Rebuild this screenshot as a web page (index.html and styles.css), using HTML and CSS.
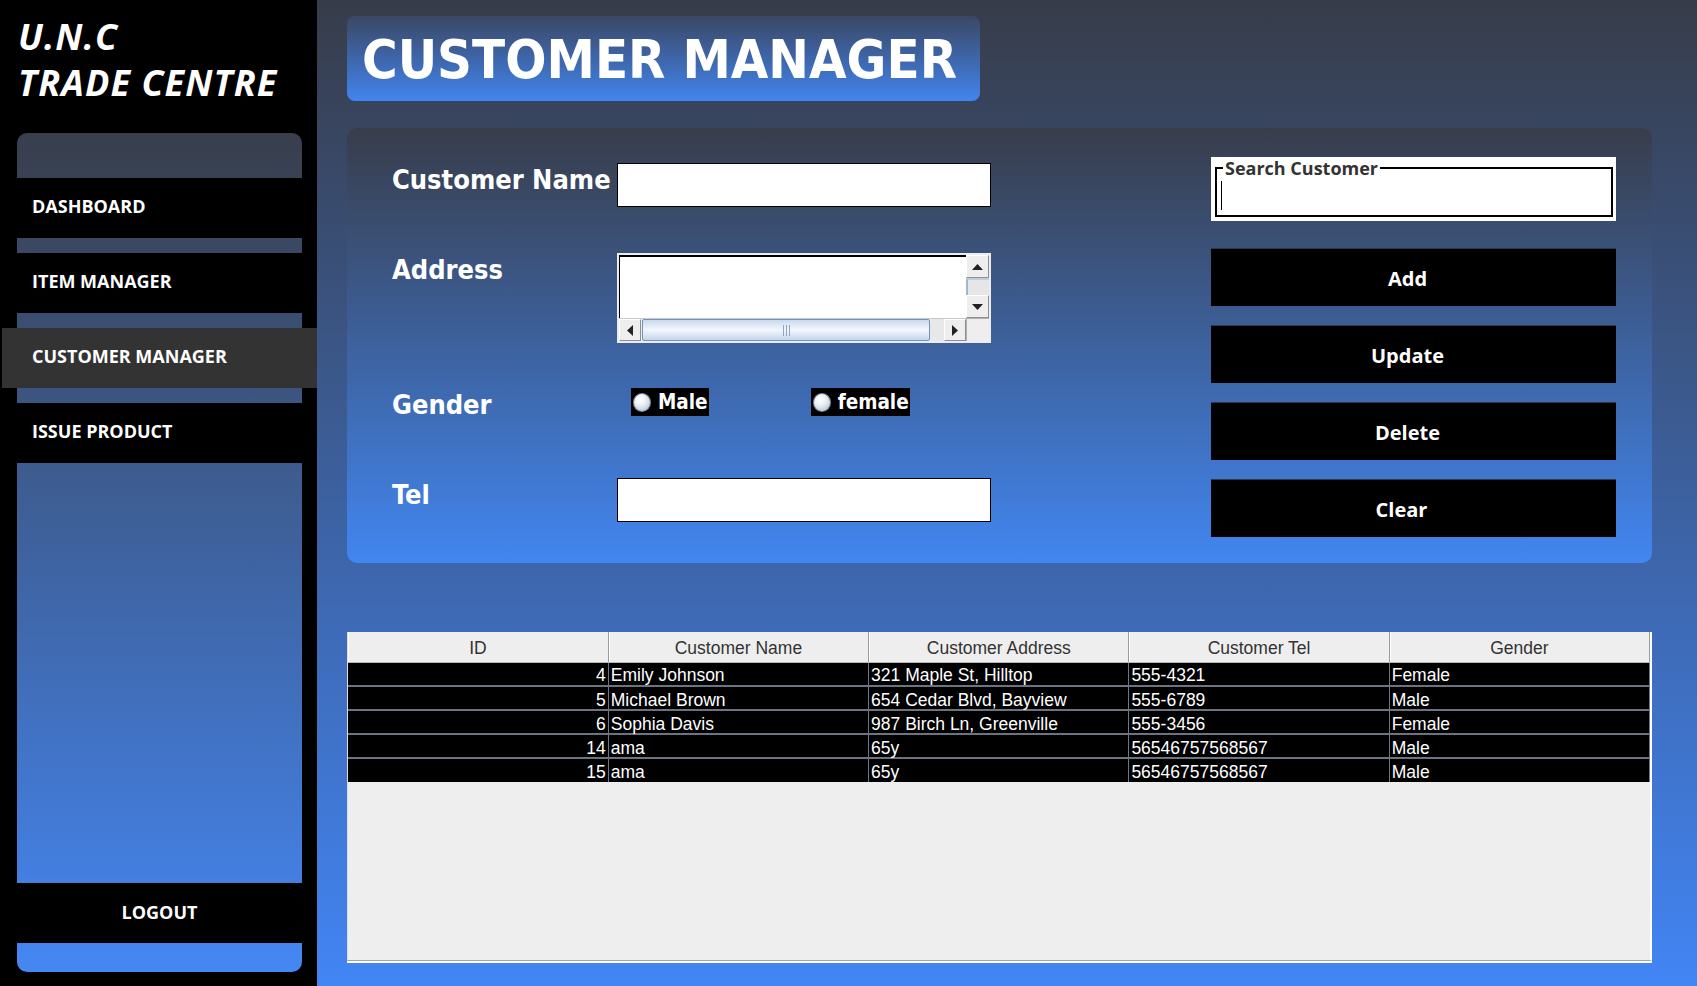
FILE: index.html
```html
<!DOCTYPE html>
<html lang="en">
<head>
<meta charset="utf-8">
<title>Customer Manager</title>
<link rel="stylesheet" href="styles.css">
</head>
<body>
<aside class="sidebar">
  <div class="logo">
    <div>U.N.C</div>
    <div>TRADE CENTRE</div>
  </div>
  <nav class="nav">
    <div class="nav-top"></div>
    <a class="nav-item">DASHBOARD</a>
    <a class="nav-item">ITEM MANAGER</a>
    <a class="nav-item active">CUSTOMER MANAGER</a>
    <a class="nav-item last">ISSUE PRODUCT</a>
    <div class="nav-fill"></div>
    <a class="nav-logout">LOGOUT</a>
    <div class="nav-bottom"></div>
  </nav>
</aside>

<main class="main">
  <header class="title-box"><h1>CUSTOMER MANAGER</h1></header>

  <section class="form-panel">
    <div class="form-left">
      <div class="lbl">Customer Name</div>
      <div class="input"></div>

      <div class="lbl">Address</div>
      <div class="ta">
        <div class="ta-text"></div>
        <div class="vs">
          <div class="sb-btn"><svg width="11" height="6" viewBox="0 0 11 6"><path d="M0 6 L5.5 0 L11 6 Z" fill="#222"/></svg></div>
          <div class="vs-track"></div>
          <div class="sb-btn"><svg width="11" height="6" viewBox="0 0 11 6"><path d="M0 0 L11 0 L5.5 6 Z" fill="#222"/></svg></div>
        </div>
        <div class="hs">
          <div class="sb-btn"><svg width="6" height="11" viewBox="0 0 6 11"><path d="M6 0 L6 11 L0 5.5 Z" fill="#222"/></svg></div>
          <div class="hs-thumb"><span class="grip"></span></div>
          <div class="hs-track"></div>
          <div class="sb-btn"><svg width="6" height="11" viewBox="0 0 6 11"><path d="M0 0 L6 5.5 L0 11 Z" fill="#222"/></svg></div>
        </div>
        <div class="corner"></div>
      </div>

      <div class="lbl">Gender</div>
      <div class="radios">
        <label class="radio"><span class="dot"></span>Male</label>
        <label class="radio"><span class="dot"></span>female</label>
      </div>

      <div class="lbl">Tel</div>
      <div class="input"></div>
    </div>

    <div class="form-right">
      <div class="search">
        <fieldset>
          <legend>Search Customer</legend>
          <span class="caret"></span>
        </fieldset>
      </div>
      <button class="btn first">Add</button>
      <button class="btn">Update</button>
      <button class="btn">Delete</button>
      <button class="btn clear">Clear</button>
    </div>
  </section>

  <section class="table-wrap">
    <table>
      <thead>
        <tr><th>ID</th><th>Customer Name</th><th>Customer Address</th><th>Customer Tel</th><th>Gender</th></tr>
      </thead>
      <tbody>
        <tr><td class="num">4</td><td>Emily Johnson</td><td>321 Maple St, Hilltop</td><td>555-4321</td><td>Female</td></tr>
        <tr><td class="num">5</td><td>Michael Brown</td><td>654 Cedar Blvd, Bayview</td><td>555-6789</td><td>Male</td></tr>
        <tr><td class="num">6</td><td>Sophia Davis</td><td>987 Birch Ln, Greenville</td><td>555-3456</td><td>Female</td></tr>
        <tr><td class="num">14</td><td>ama</td><td>65y</td><td>56546757568567</td><td>Male</td></tr>
        <tr><td class="num">15</td><td>ama</td><td>65y</td><td>56546757568567</td><td>Male</td></tr>
      </tbody>
    </table>
  </section>
</main>
</body>
</html>
```

FILE: styles.css
```css
* { box-sizing: border-box; }

html, body {
  margin: 0;
  height: 100%;
}

body {
  display: flex;
  width: 1697px;
  height: 986px;
  overflow: hidden;
  background: #000;
  font-family: "Open Sans", "Noto Sans", sans-serif;
}

/* ---------- sidebar ---------- */
.sidebar {
  width: 317px;
  flex: none;
  background: #000;
  display: flex;
  flex-direction: column;
}

.logo {
  padding: 14px 0 0 18px;
  color: #fff;
  font-style: italic;
  font-weight: 700;
  font-size: 36px;
  line-height: 46px;
  letter-spacing: 1.1px;
}

.nav {
  margin: 27px 15px 0 17px;
  height: 839px;
  border-radius: 10px;
  background: linear-gradient(#383e4c, #4587f3);
  display: flex;
  flex-direction: column;
}

.nav-top { height: 45px; }

.nav-item {
  height: 60px;
  margin-bottom: 15px;
  padding: 0 0 4px 15px;
  background: #000;
  color: #fff;
  font-weight: 700;
  font-size: 18px;
  display: flex;
  align-items: center;
}

.nav-item.active {
  background: #333333;
  margin-left: -15px;
  margin-right: -15px;
  padding-left: 30px;
}

.nav-item.last { margin-bottom: 0; }

.nav-fill { flex: 1; }

.nav-logout {
  height: 60px;
  padding-bottom: 3px;
  background: #000;
  color: #fff;
  font-weight: 700;
  font-size: 18px;
  display: flex;
  align-items: center;
  justify-content: center;
}

.nav-bottom { height: 29px; }

/* ---------- main ---------- */
.main {
  flex: 1;
  background: linear-gradient(#373c4a, #4285f4);
  padding: 16px 45px 0 30px;
}

.title-box {
  width: 633px;
  height: 85px;
  border-radius: 8px;
  background: linear-gradient(#3a4763, #4285f0);
  display: flex;
  align-items: center;
  padding: 3px 0 0 15px;
}

.title-box h1 {
  margin: 0;
  color: #fff;
  font-family: "DejaVu Sans Condensed", "DejaVu Sans", sans-serif;
  font-stretch: condensed;
  font-weight: 700;
  font-size: 54px;
  line-height: 64px;
}

.form-panel {
  margin-top: 27px;
  height: 435px;
  border-radius: 10px;
  background: linear-gradient(#383d4b, #4286f0);
  display: flex;
  padding: 0 36px 0 45px;
}

.form-left {
  padding-top: 35px;
  display: grid;
  grid-template-columns: 225px 374px;
  grid-template-rows: 90px 135px 90px 45px;
  align-items: start;
}

.lbl {
  color: #fff;
  font-family: "DejaVu Sans Condensed", "DejaVu Sans", sans-serif;
  font-stretch: condensed;
  font-weight: 700;
  font-size: 27px;
  line-height: 32px;
  margin-top: 1px;
  white-space: nowrap;
}

.input {
  height: 44px;
  background: #fff;
  border: 1px solid #000;
}

/* text area with scrollbars */
.ta {
  width: 374px;
  height: 90px;
  border: 2px solid #ececec;
  background: #fff;
  display: grid;
  grid-template-columns: 347px 23px;
  grid-template-rows: 63px 23px;
}

.ta-text {
  background: #fff;
  border-top: 2px solid #000;
  border-left: 1px solid #000;
}

.sb-btn {
  background: #eeeeee;
  border: 1px solid;
  border-color: #ffffff #8f8f8f #8f8f8f #ffffff;
  display: flex;
  align-items: center;
  justify-content: center;
}

.vs {
  background: #eeeeee;
  display: flex;
  flex-direction: column;
}

.vs .sb-btn { height: 23px; }

.vs-track {
  flex: 1;
  border-top: 2px solid #b8cfe6;
  border-left: 2px solid #9fb7cf;
  background: #e6e6e6;
}

.hs {
  background: #eeeeee;
  display: flex;
  border-top: 1px solid #c8c8c8;
}

.hs .sb-btn { width: 22px; }

.hs-thumb {
  width: 288px;
  margin-left: 1px;
  border: 1px solid #6f93c4;
  border-radius: 2px;
  background: linear-gradient(#c9d9ee, #f4f7fc 50%, #c4d5ec);
  display: flex;
  align-items: center;
  justify-content: center;
}

.grip {
  width: 7px;
  height: 11px;
  border-left: 1px solid #8ea6c6;
  border-right: 1px solid #8ea6c6;
  background: linear-gradient(90deg, transparent 2px, #8ea6c6 2px, #8ea6c6 3px, transparent 3px);
}

.hs-track {
  width: 14px;
  background: #e8e8e8;
}

.corner {
  background: #eeeeee;
  border-top: 1px solid #b0b0b0;
  border-left: 1px solid #b0b0b0;
}

/* radios */
.radios {
  display: flex;
  gap: 102px;
  padding-left: 14px;
}

.radio {
  height: 28px;
  background: #000;
  color: #fff;
  display: flex;
  align-items: center;
  gap: 7px;
  padding: 0 1px 0 2px;
  font-family: "DejaVu Sans Condensed", "DejaVu Sans", sans-serif;
  font-stretch: condensed;
  font-weight: 700;
  font-size: 20.5px;
  line-height: 28px;
}

.dot {
  width: 18px;
  height: 19px;
  border-radius: 50%;
  border: 1px solid #7f8c9c;
  background: radial-gradient(circle at 38% 32%, #ffffff 0%, #eef2f7 35%, #a9b8ca 100%);
}

/* right column */
.form-right {
  margin-left: auto;
  width: 405px;
  padding-top: 29px;
  display: flex;
  flex-direction: column;
}

.search {
  height: 64px;
  background: #fff;
  padding: 1px 3px 4px 4px;
}

.search fieldset {
  height: 100%;
  margin: 0;
  border: 2px solid #000;
  padding: 0 0 0 4px;
}

.search legend {
  margin-left: 2px;
  padding: 0 2px;
  font-size: 18px;
  line-height: 20px;
  font-weight: 700;
  color: #333;
}

.caret {
  display: block;
  width: 1px;
  height: 29px;
  margin-top: 3px;
  background: #000;
}

.btn {
  height: 58px;
  margin-top: 19px;
  border: none;
  border-top: 1px solid #2b3852;
  background: #000;
  color: #fff;
  font-family: "Open Sans", "Noto Sans", sans-serif;
  font-weight: 700;
  font-size: 20px;
  padding: 2px 12px 0 0;
}

.btn.first { margin-top: 27px; }
.btn.clear { padding-right: 24px; }

/* table */
.table-wrap {
  margin-top: 69px;
  height: 329px;
  background: #eeeeee;
  border-left: 1px solid #dcdcdc;
  border-right: 2px solid #ffffff;
  border-bottom: 1px solid #9aa6b2;
  box-shadow: 0 2px 0 #ffffff;
}

table {
  width: 100%;
  border-collapse: collapse;
  table-layout: fixed;
  font-family: "Liberation Sans", Arial, sans-serif;
  font-size: 17.5px;
}

th {
  height: 30px;
  padding: 4px 0 0;
  background: #eeeeee;
  color: #333;
  font-weight: 400;
  border-right: 1px solid #9a9a9a;
  border-bottom: 1px solid #b8b8b8;
  box-shadow: inset 1px 0 #ffffff;
}

td {
  height: 24px;
  padding: 3px 2px 0;
  background: #000;
  color: #fff;
  border-right: 1px solid #6f7784;
  border-bottom: 2px solid #6c7482;
  white-space: nowrap;
  line-height: 18px;
}

tbody tr:last-child td { border-bottom: none; }

td.num { text-align: right; }
```
